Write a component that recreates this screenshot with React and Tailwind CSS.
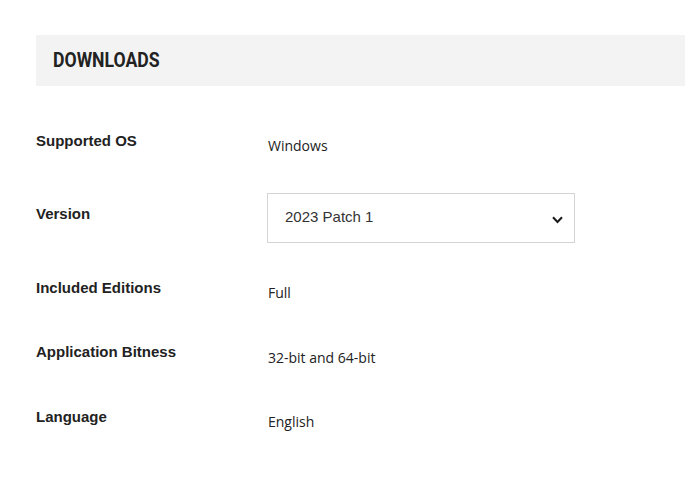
export default function App() {
  const label = "w-[232px] shrink-0 font-['Liberation_Sans',Arial,sans-serif] font-bold text-[15px] leading-5 text-[#222]";
  const value = "font-['Open_Sans','Noto_Sans',sans-serif] text-[14px] leading-5 text-[#222]";
  return (
    <div className="w-[685px] h-[499px] bg-white overflow-hidden pl-[36px] pt-[35px]">
      <div className="h-[51px] bg-[#f3f3f3] flex items-center pl-[17px]">
        <span className="font-['Roboto',sans-serif] font-bold text-[21px] leading-none text-[#222] scale-x-[0.84] origin-left inline-block">
          DOWNLOADS
        </span>
      </div>
      <div className="mt-[44px] h-[63px] flex">
        <div className={label + " pt-[1px]"}>Supported OS</div>
        <div className={value + " pt-[6px]"}>Windows</div>
      </div>
      <div className="h-[85px] flex">
        <div className={label + " pt-[11px]"}>Version</div>
        <div className="-ml-[1px] w-[308px] h-[50px] border border-[#d4d4d4] bg-white flex items-center justify-between pl-[17px] pr-[11px]">
          <span className="font-['Liberation_Sans',Arial,sans-serif] text-[15px] text-[#333] leading-5 -mt-[3px]">2023 Patch 1</span>
          <svg width="11" height="8" viewBox="0 0 11 8" className="mt-[4px]">
            <path d="M1 1.2 L5.5 6 L10 1.2" fill="none" stroke="#1a1a1a" strokeWidth="2" />
          </svg>
        </div>
      </div>
      <div className="h-[64px] flex">
        <div className={label}>Included Editions</div>
        <div className={value + " pt-[5px]"}>Full</div>
      </div>
      <div className="h-[65px] flex">
        <div className={label}>Application Bitness</div>
        <div className={value + " pt-[6px]"}>32-bit and 64-bit</div>
      </div>
      <div className="flex">
        <div className={label}>Language</div>
        <div className={value + " pt-[5px]"}>English</div>
      </div>
    </div>
  );
}
